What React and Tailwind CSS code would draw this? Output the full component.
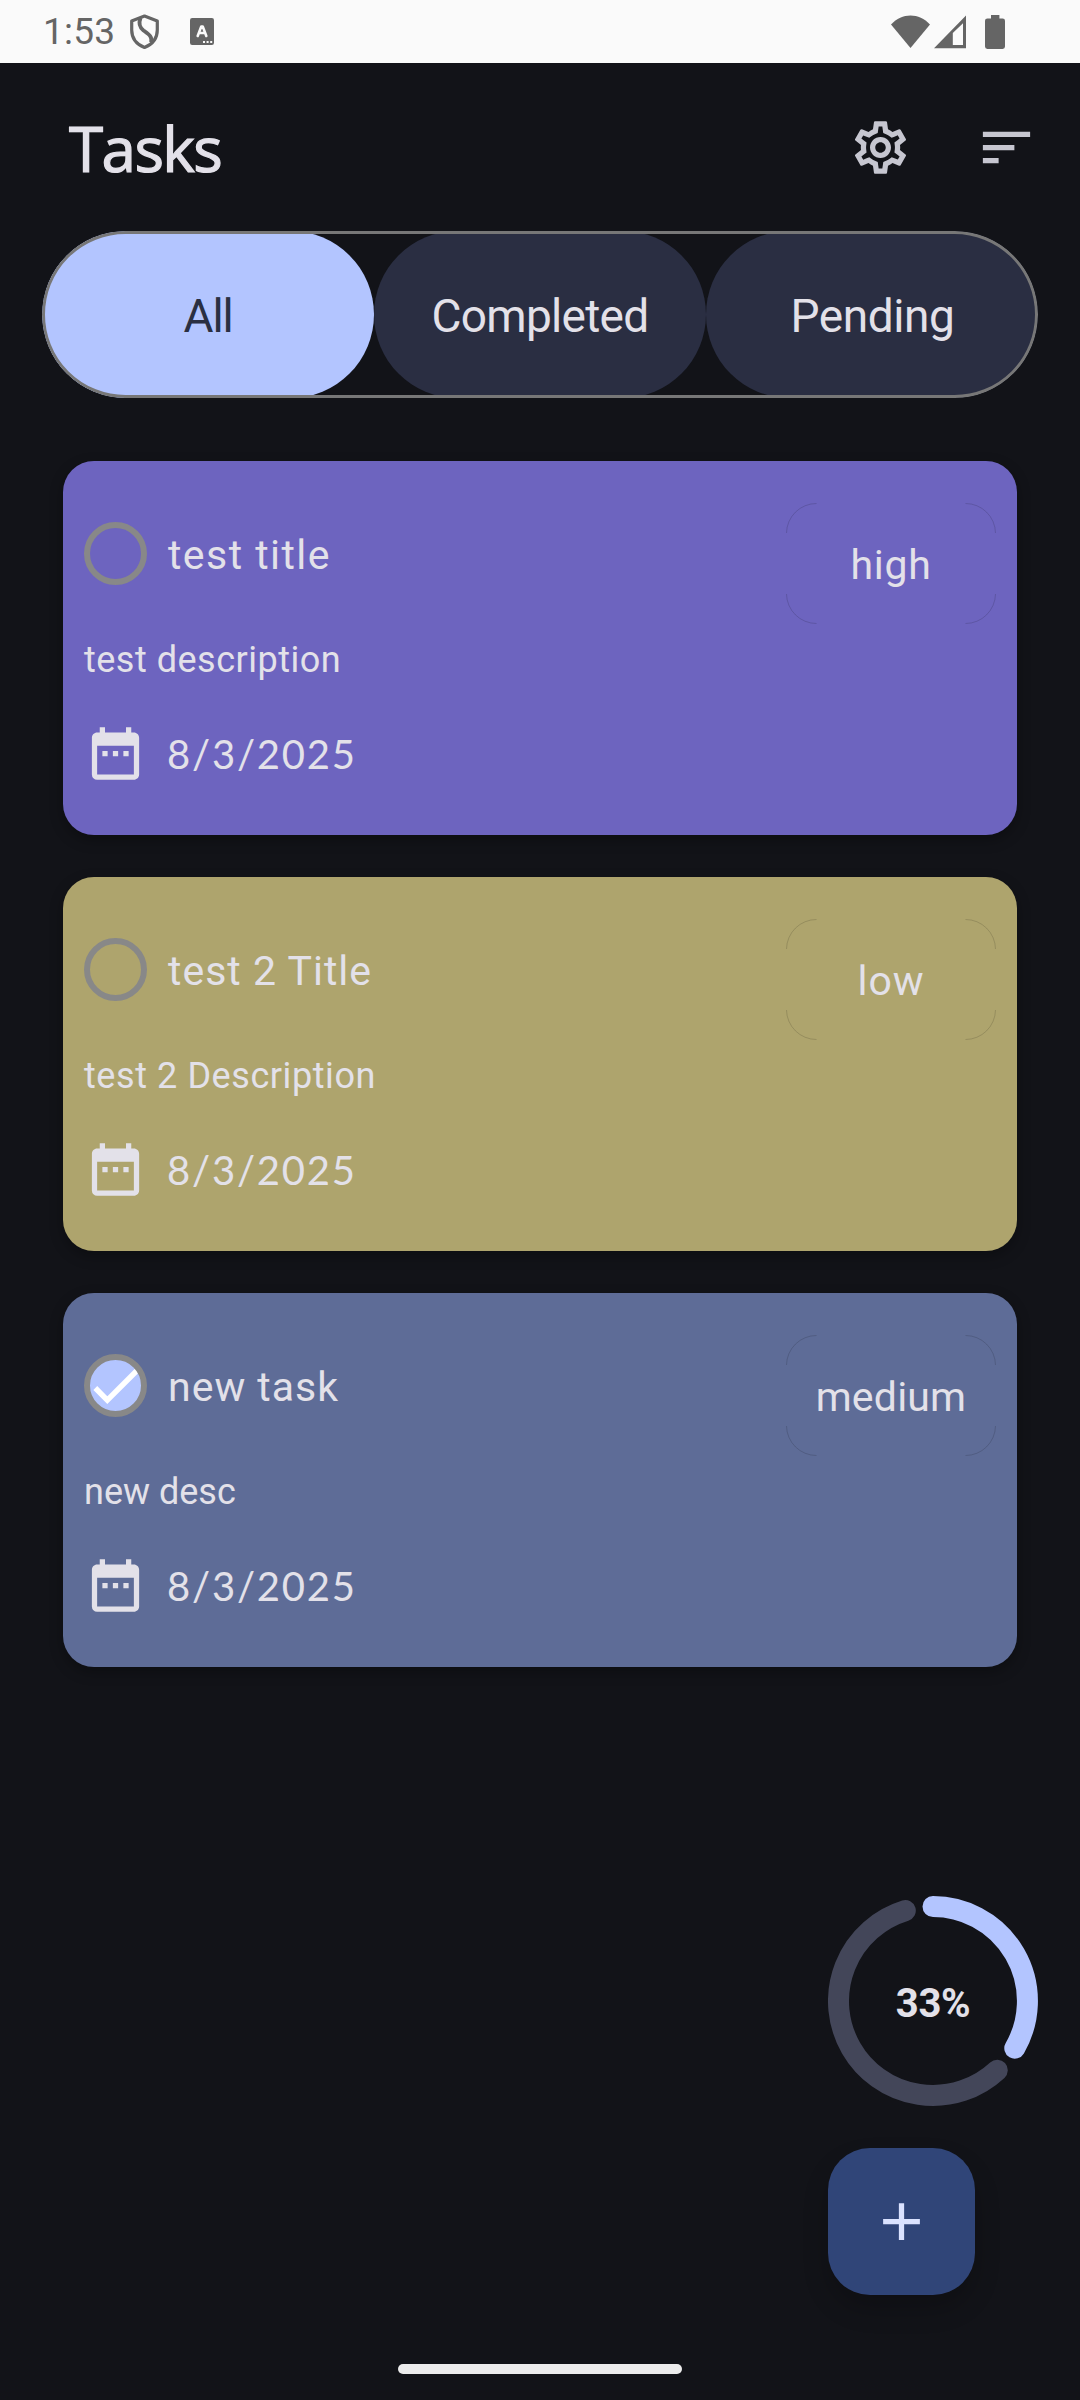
import React from "react";
import { MdAdd, MdDateRange, MdOutlineSettings, MdSort } from "react-icons/md";

const tabs = [
  { label: "All", pill: "bg-[#b3c5ff] text-[#2a2f42] tracking-[-1.2px]" },
  { label: "Completed", pill: "bg-[#2a2e42] text-[#e3e1e9] tracking-[-0.7px]" },
  { label: "Pending", pill: "bg-[#2a2e42] text-[#e3e1e9] tracking-[-0.4px] pl-[1px]" },
];

const tasks = [
  {
    title: "test title",
    titleClass: "tracking-[1.45px]",
    description: "test description",
    descriptionClass: "tracking-[0.5px]",
    date: "8/3/2025",
    priority: "high",
    priorityClass: "tracking-[0.7px]",
    card: "bg-[#6d64bf]",
    done: false,
  },
  {
    title: "test 2 Title",
    titleClass: "tracking-[1.02px]",
    description: "test 2 Description",
    descriptionClass: "tracking-[0.58px]",
    date: "8/3/2025",
    priority: "low",
    priorityClass: "tracking-[0.95px]",
    card: "bg-[#aea46d]",
    done: false,
  },
  {
    title: "new task",
    titleClass: "tracking-[1px]",
    description: "new desc",
    descriptionClass: "tracking-[0px]",
    date: "8/3/2025",
    priority: "medium",
    priorityClass: "tracking-[0.2px]",
    card: "bg-[#5e6c97]",
    done: true,
  },
];

function StatusBar() {
  return (
    <div className="flex h-[63px] shrink-0 items-center bg-[#fafafa] text-[#656565]">
      <span className="ml-[43px] w-[87px] text-[37px] leading-none tracking-[0.2px]">1:53</span>
      <svg className="h-[36px] w-[30px]" viewBox="0 0 30 36" fill="none" stroke="currentColor" strokeWidth="3.2" strokeLinejoin="round">
        <path d="M14.5 2 L27.3 7 V16 C27.3 24.5 22 30.5 14.5 33.5 C7 30.5 1.7 24.5 1.7 16 V7 Z" />
        <path d="M10.5 4 C8.6 9 9 13 13.5 16.5 C19 20.5 22.5 22.5 21.2 28.5" strokeWidth="3.8" />
      </svg>
      <svg className="ml-[30px] h-[27px] w-[24px]" viewBox="0 0 24 27">
        <rect width="24" height="27" rx="2.2" fill="currentColor" />
        <path d="M7.7 18 L11.2 8.6 H12.8 L16.3 18 M9 15 H15" fill="none" stroke="#fafafa" strokeWidth="2.6" strokeLinecap="round" strokeLinejoin="round" />
        <path d="M13 23h2v2h-2zM16.6 23h2v2h-2zM20.2 23h2v2h-2z" fill="#fafafa" />
      </svg>
      <div className="ml-auto mr-[75px] flex items-center">
        <svg className="h-[34px] w-[39px]" viewBox="0 0 39 34" fill="currentColor">
          <path d="M0 9.4 C11 -2.6 28 -2.6 39 9.4 L19.5 33 Z" />
        </svg>
        <svg className="ml-[4px] h-[34px] w-[32px]" viewBox="0 0 32 34" fill="currentColor" fillRule="evenodd">
          <path d="M0 33.2 L32 0.5 V33.2 Z M18.8 18 V30 H29 V8.2 Z" />
        </svg>
        <svg className="ml-[19px] h-[34px] w-[20px]" viewBox="0 0 20 34" fill="currentColor">
          <path d="M6 0 H14.4 V3.4 H17.6 A2.4 2.4 0 0 1 20 5.8 V31.6 A2.4 2.4 0 0 1 17.6 34 H2.4 A2.4 2.4 0 0 1 0 31.6 V5.8 A2.4 2.4 0 0 1 2.4 3.4 H6 Z" />
        </svg>
      </div>
    </div>
  );
}

function Header() {
  return (
    <header className="flex h-[168px] shrink-0 items-center pr-[42px] pl-[69px]">
      <h1 className="pt-[1px] font-['Open_Sans',sans-serif] text-[62px] leading-none tracking-[-1.6px] text-[#e3e1e9] [-webkit-text-stroke:1.2px_#e3e1e9]">Tasks</h1>
      <MdOutlineSettings className="ml-auto size-[63px] text-[#c6c6d0]" />
      <MdSort className="ml-[63px] size-[63px] text-[#c6c6d0]" />
    </header>
  );
}

function Tabs() {
  return (
    <nav className="relative mx-[42px] flex h-[167px] shrink-0 overflow-hidden rounded-full">
      {tabs.map((tab) => (
        <button key={tab.label} className={`flex h-full w-[332px] shrink-0 items-center justify-center rounded-full pt-[3px] text-[46px] leading-none ${tab.pill}`}>
          {tab.label}
        </button>
      ))}
      <span className="pointer-events-none absolute inset-0 rounded-full border-[3px] border-[#777777]" />
    </nav>
  );
}

function Checkbox({ done }) {
  return (
    <svg className="size-[63px] shrink-0" viewBox="0 0 63 63" fill="none">
      <circle cx="31.5" cy="31.5" r="28.5" fill={done ? "#b3c5ff" : "none"} />
      {done && <path d="M11.3 34 L23.3 46.2 L53 16.5" stroke="#ffffff" strokeWidth="5.4" />}
      <circle cx="31.5" cy="31.5" r="28.5" stroke="#888888" strokeWidth="6" />
    </svg>
  );
}

function PriorityBadge({ label, labelClass }) {
  return (
    <div className="relative flex h-[121px] w-[210px] items-center justify-center pt-[3px]">
      <svg className="absolute inset-0" width="210" height="121" viewBox="0 0 210 121" fill="none" stroke="#000000" strokeOpacity="0.14">
        <path d="M0.5 30 A30 30 0 0 1 30.5 0.5 M179.5 0.5 A30 30 0 0 1 209.5 30 M209.5 91 A30 30 0 0 1 179.5 120.5 M30.5 120.5 A30 30 0 0 1 0.5 91" />
      </svg>
      <span className={`text-[41px] leading-none ${labelClass}`}>{label}</span>
    </div>
  );
}

function TaskCard({ task }) {
  return (
    <article className={`flex h-[374px] justify-between rounded-[31px] px-[21px] pt-[42px] text-[#e3e1e9] shadow-[0_5px_14px_rgba(0,0,0,0.3)] ${task.card}`}>
      <div className="flex flex-col pt-[19px]">
        <div className="flex h-[63px] items-center gap-[21px]">
          <Checkbox done={task.done} />
          <span className={`pt-[3px] text-[41px] leading-none whitespace-nowrap ${task.titleClass}`}>{task.title}</span>
        </div>
        <p className={`mt-[50px] text-[36px] leading-[50px] whitespace-nowrap ${task.descriptionClass}`}>{task.description}</p>
        <div className="mt-[37px] flex h-[63px] items-center gap-[20px]">
          <MdDateRange className="size-[63px]" />
          <span className="font-[Lato,sans-serif] text-[40px] leading-none tracking-[1.8px]">{task.date}</span>
        </div>
      </div>
      <PriorityBadge label={task.priority} labelClass={task.priorityClass} />
    </article>
  );
}

function ProgressRing() {
  return (
    <div className="relative flex size-[210px] items-center justify-center">
      <svg className="absolute inset-0" width="210" height="210" viewBox="0 0 210 210" fill="none" strokeWidth="21" strokeLinecap="round">
        <path d="M169.3 174.2 A94.5 94.5 0 1 1 77.3 14.6" stroke="#434659" />
        <path d="M105 10.5 A94.5 94.5 0 0 1 186.8 152.2" stroke="#b3c5ff" />
      </svg>
      <span className="pt-[5px] text-[40px] leading-none font-bold tracking-[-0.4px] text-[#e3e1e9]">33%</span>
    </div>
  );
}

export default function App() {
  return (
    <div className="flex h-[2400px] w-[1080px] flex-col overflow-hidden bg-[#121318] font-[Roboto,sans-serif]">
      <StatusBar />
      <Header />
      <Tabs />
      <main className="mt-[63px] flex flex-col gap-[42px] px-[63px]">
        {tasks.map((task) => (
          <TaskCard key={task.title} task={task} />
        ))}
      </main>
      <div className="mt-[229px] ml-[828px] flex flex-col gap-[42px]">
        <ProgressRing />
        <button className="flex size-[147px] items-center justify-center rounded-[42px] bg-[#304578] text-[#dae2ff] shadow-[0_14px_26px_rgba(0,0,0,0.2)]">
          <MdAdd className="size-[63px]" />
        </button>
      </div>
      <div className="mt-[69px] h-[10px] w-[284px] self-center rounded-[5px] bg-[#ececec]" />
    </div>
  );
}
